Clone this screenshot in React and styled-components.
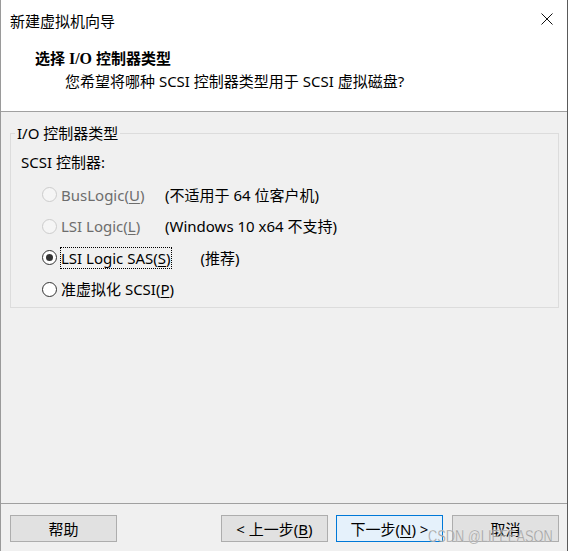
import React from 'react'
import styled, { createGlobalStyle } from 'styled-components';

const GlobalStyle = createGlobalStyle`
  * { box-sizing: border-box; }
  html, body { margin: 0; padding: 0; background: #ffffff; }
  body {
    font-family: "Noto Sans", "Noto Sans CJK SC", sans-serif;
    font-size: 15px;
    color: #000000;
  }
`;

function Radio({ checked, disabled }) {
  return <RadioCircle $checked={checked} $disabled={disabled} />
}

function App() {
  return (
    <>
      <GlobalStyle />
      <Window>
        <TitleBar>
          <TitleText>新建虚拟机向导</TitleText>
          <CloseButton>
            <svg width="12" height="12" viewBox="0 0 12 12">
              <path d="M0.5 0.5 L11.5 11.5 M11.5 0.5 L0.5 11.5" stroke="#111" strokeWidth="1" fill="none" />
            </svg>
          </CloseButton>
        </TitleBar>
        <Header>
          <Heading>选择 <Serif>I/O</Serif> 控制器类型</Heading>
          <SubHeading>您希望将哪种 SCSI 控制器类型用于 SCSI 虚拟磁盘?</SubHeading>
        </Header>
        <Body>
          <GroupBox>
            <Legend>I/O 控制器类型</Legend>
            <GroupContent>
              <FieldLabel>SCSI 控制器:</FieldLabel>
              <Options>
                <OptionRow>
                  <Radio disabled />
                  <OptionLabel $disabled>BusLogic(<u>U</u>)</OptionLabel>
                  <Note>(不适用于 64 位客户机)</Note>
                </OptionRow>
                <OptionRow>
                  <Radio disabled />
                  <OptionLabel $disabled>LSI Logic(<u>L</u>)</OptionLabel>
                  <Note>(Windows 10 x64 不支持)</Note>
                </OptionRow>
                <OptionRow>
                  <Radio checked />
                  <OptionLabel $focused>LSI Logic SAS(<u>S</u>)</OptionLabel>
                  <Note $offset={30}>(推荐)</Note>
                </OptionRow>
                <OptionRow>
                  <Radio />
                  <OptionLabel>准虚拟化 SCSI(<u>P</u>)</OptionLabel>
                </OptionRow>
              </Options>
            </GroupContent>
          </GroupBox>
        </Body>
        <Footer>
          <Button>帮助</Button>
          <Spacer />
          <Button>&lt; 上一步(<u>B</u>)</Button>
          <Button $primary>下一步(<u>N</u>) &gt;</Button>
          <Button $last>取消</Button>
          <Watermark>CSDN @LIFEEASON</Watermark>
        </Footer>
      </Window>
    </>
  )
}

export default App

const Window = styled.div`
  width: 568px;
  height: 551px;
  display: flex;
  flex-direction: column;
  border-left: 1px solid #9a9a9a;
  border-right: 1px solid #5a5a5a;
  background: #f0f0f0;
  overflow: hidden;
`;
const TitleBar = styled.div`
  height: 40px;
  display: flex;
  align-items: center;
  justify-content: space-between;
  padding: 2px 0 0 9px;
  background: #ffffff;
`;
const TitleText = styled.div`
  line-height: 20px;
  font-size: 15px;
`;
const CloseButton = styled.div`
  width: 46px;
  height: 38px;
  display: flex;
  align-items: center;
  justify-content: center;
  margin-top: -4px;
  margin-right: -3px;
`;
const Header = styled.div`
  height: 72px;
  display: flex;
  flex-direction: column;
  padding: 8px 0 0 34px;
  background: #ffffff;
  border-bottom: 1px solid #a0a0a0;
`;
const Heading = styled.div`
  line-height: 20px;
  font-size: 15px;
  font-weight: 700;
`;
const Serif = styled.span`
  font-family: "Liberation Serif", serif;
  font-size: 16px;
`;
const SubHeading = styled.div`
  margin: 2px 0 0 30px;
  line-height: 20px;
  font-size: 15px;
`;
const Body = styled.div`
  flex: 1;
  padding: 12px 8px 0 9px;
`;
const GroupBox = styled.fieldset`
  margin: 0;
  padding: 0;
  height: 184px;
  border: 1px solid #dcdcdc;
  min-width: 0;
`;
const Legend = styled.legend`
  margin-left: 4px;
  padding: 0 2px;
  line-height: 18px;
  font-size: 15px;
`;
const GroupContent = styled.div`
  display: flex;
  flex-direction: column;
  padding: 10px 0 0 10px;
`;
const FieldLabel = styled.div`
  line-height: 20px;
`;
const Options = styled.div`
  display: flex;
  flex-direction: column;
  margin-top: 7px;
  padding-left: 21px;
`;
const OptionRow = styled.div`
  height: 31.5px;
  display: flex;
  align-items: center;
`;
const RadioCircle = styled.span`
  position: relative;
  flex: none;
  width: 15px;
  height: 15px;
  border-radius: 50%;
  border: 1px solid ${p => (p.$disabled ? '#cccccc' : '#333333')};
  background: ${p => (p.$disabled ? '#f5f5f5' : '#ffffff')};
  &::after {
    content: '';
    display: ${p => (p.$checked ? 'block' : 'none')};
    position: absolute;
    left: 3px;
    top: 3px;
    width: 7px;
    height: 7px;
    border-radius: 50%;
    background: #333333;
  }
`;
const OptionLabel = styled.span`
  margin-left: 4px;
  min-width: 104px;
  line-height: 20px;
  color: ${p => (p.$disabled ? '#6d6d6d' : '#000000')};
  ${p => p.$focused && `
    min-width: 0;
    outline: 1px dotted #000000;
    outline-offset: 0px;
  `}
  u { text-underline-offset: 2px; }
`;
const Note = styled.span`
  margin-left: ${p => p.$offset || 0}px;
  line-height: 20px;
`;
const Footer = styled.div`
  position: relative;
  height: 48px;
  display: flex;
  align-items: flex-start;
  gap: 8px;
  padding: 11px 8px 0 9px;
  border-top: 1px solid #a0a0a0;
`;
const Spacer = styled.div`
  flex: 1;
`;
const Button = styled.div`
  width: 107px;
  height: 27px;
  display: flex;
  align-items: center;
  justify-content: center;
  margin-left: ${p => (p.$last ? '1px' : '0')};
  font-size: 15px;
  line-height: 20px;
  background: ${p => (p.$primary ? '#e5f1fb' : '#e1e1e1')};
  border: 1px solid ${p => (p.$primary ? '#0078d7' : '#adadad')};
  u { text-underline-offset: 2px; }
`;
const Watermark = styled.div`
  position: absolute;
  left: 427px;
  top: 24px;
  font-family: "Liberation Sans", Arial, sans-serif;
  font-size: 16px;
  line-height: 18px;
  color: rgba(150, 150, 150, 0.85);
  -webkit-text-stroke: 0.3px rgba(255, 255, 255, 0.6);
  transform: scaleX(0.8);
  transform-origin: left center;
  white-space: nowrap;
  pointer-events: none;
`;
